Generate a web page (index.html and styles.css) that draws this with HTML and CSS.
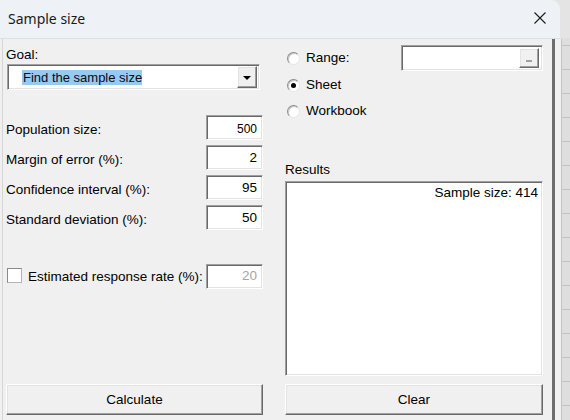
FILE: index.html
```html
<!DOCTYPE html>
<html>
<head>
<meta charset="utf-8">
<link rel="stylesheet" href="styles.css">
</head>
<body>
<div class="titlebar">
  <span class="title">Sample size</span>
  <svg class="close" width="12" height="12" viewBox="0 0 12 12"><path d="M0.5 0.5L11.5 11.5M11.5 0.5L0.5 11.5" stroke="#1b1b1b" stroke-width="1.1" fill="none"/></svg>
</div>
<div class="main">
  <div class="dialog">
    <div class="col left">
      <div class="goal">Goal:</div>
      <div class="select sunken">
        <span class="sel-text">Find the sample size</span>
        <span class="drop raised"><span class="tri"></span></span>
      </div>
      <div class="field first"><span class="lbl">Population size:</span><span class="box sunken small">500</span></div>
      <div class="field"><span class="lbl">Margin of error (%):</span><span class="box sunken">2</span></div>
      <div class="field"><span class="lbl">Confidence interval (%):</span><span class="box sunken">95</span></div>
      <div class="field"><span class="lbl">Standard deviation (%):</span><span class="box sunken">50</span></div>
      <div class="check-row">
        <span class="check"></span>
        <span class="check-lbl">Estimated response rate (%):</span>
        <span class="box sunken disabled">20</span>
      </div>
      <div class="btn raised">Calculate</div>
    </div>
    <div class="col right">
      <div class="radio-row range">
        <span class="radio"></span><span class="radio-lbl">Range:</span>
        <span class="range-box sunken"><span class="ref-btn raised"><span class="dash"></span></span></span>
      </div>
      <div class="radio-row sheet">
        <span class="radio on"></span><span class="radio-lbl">Sheet</span>
      </div>
      <div class="radio-row">
        <span class="radio"></span><span class="radio-lbl">Workbook</span>
      </div>
      <div class="results-lbl">Results</div>
      <div class="results sunken">Sample size: 414</div>
      <div class="btn raised clear">Clear</div>
    </div>
  </div>
  <div class="divider"></div>
  <div class="gutter"></div>
  <div class="sheetstrip"></div>
</div>
</body>
</html>
```
FILE: styles.css
```css
* { box-sizing: border-box; }
html, body { margin: 0; padding: 0; }
body {
  width: 570px;
  height: 420px;
  overflow: hidden;
  background: #e4e4e4;
  font-family: "Liberation Sans", Arial, sans-serif;
  font-size: 13.5px;
  color: #000;
}
.titlebar {
  width: 560px;
  height: 38px;
  background: #eef2f6;
  border-top-right-radius: 9px;
  display: flex;
  align-items: center;
  padding: 0 0 2px 8px;
}
.title {
  font-family: "Noto Sans", "Open Sans", sans-serif;
  font-size: 14px;
  color: #1a1a1a;
}
.close { margin-left: auto; margin-right: 14px; margin-top: 0; }
.main {
  display: flex;
  height: 382px;
  border-top: 1px solid #dcdfe3;
}
.dialog {
  width: 552px;
  background: #f0f0f0;
  display: flex;
  gap: 22px;
  padding: 0 9px 5px 6px;
  box-shadow: inset 2px 0 0 #f0f0f0, inset 3px 0 0 #d6d6d6;
}
.divider { width: 3px; background: #6d6d6d; }
.gutter { width: 6px; background: #f0f0f0; }
.sheetstrip {
  flex: 1;
  border-left: 1px solid #c4c4c4;
  background: #dedede repeating-linear-gradient(to bottom, transparent 0, transparent 6px, #c2c2c2 6px, #c2c2c2 7px, transparent 7px, transparent 24px);
}
.col { display: flex; flex-direction: column; }
.left { width: 257px; }
.right { width: 258px; }

.sunken {
  border: 1px solid;
  border-color: #a0a0a0 #fff #fff #a0a0a0;
  box-shadow: inset 1px 1px 0 #696969, inset -1px -1px 0 #e3e3e3;
  background: #fff;
}
.raised {
  border: 1px solid;
  border-color: #fff #696969 #696969 #fff;
  box-shadow: inset -1px -1px 0 #a0a0a0, inset 1px 1px 0 #e3e3e3;
  background: #f0f0f0;
}

.goal { margin-top: 8px; line-height: 16px; height: 16px; }
.select {
  margin-top: 1px;
  margin-left: 1px;
  width: 253px;
  height: 26px;
  display: flex;
  align-items: center;
  padding: 0 2px 0 14px;
}
.sel-text {
  background: #99c9ef;
  font-size: 13px;
  line-height: 15px;
  padding: 0 0 0 1px;
  color: #0a0a20;
}
.drop {
  margin-left: auto;
  width: 20px;
  height: 22px;
  display: flex;
  align-items: center;
  justify-content: center;
}
.tri {
  width: 0; height: 0;
  border-left: 4px solid transparent;
  border-right: 4px solid transparent;
  border-top: 4px solid #000;
  margin-top: 1px;
}
.field {
  display: flex;
  align-items: center;
  justify-content: space-between;
  height: 25px;
  margin-top: 5px;
}
.field.first { margin-top: 25px; }
.lbl { padding-top: 5px; line-height: 16px; }
.box {
  width: 57px;
  height: 25px;
  text-align: right;
  padding: 4px 5px 0 0;
  line-height: 16px;
}
.box.small { font-size: 12px; padding-top: 5px; }
.box.disabled { color: #a6a6a6; padding-top: 3px; }
.check-row {
  display: flex;
  align-items: center;
  height: 25px;
  margin-top: 34px;
}
.check {
  width: 15px;
  height: 15px;
  margin-left: 1px;
  margin-top: -2px;
  background: #fff;
  border: 1px solid;
  border-color: #8a8a8a #b4b4b4 #b4b4b4 #8a8a8a;
}
.check-lbl { margin-left: 6px; line-height: 16px; }
.check-row .box { margin-left: auto; }
.btn {
  margin-top: auto;
  height: 31px;
  display: flex;
  align-items: center;
  justify-content: center;
  line-height: 16px;
}
.btn.clear { margin-top: 8px; }

.radio-row {
  display: flex;
  align-items: center;
  height: 26px;
}
.radio-row.range { margin-top: 6px; }
.radio-row.sheet { margin-top: 1px; }
.radio {
  width: 13px;
  height: 13px;
  margin-left: 2px;
  border-radius: 50%;
  background: #fff;
  border: 1px solid;
  border-color: #8c8c8c #e6e6e6 #e6e6e6 #8c8c8c;
  box-shadow: inset 1px 1px 0 #c8c8c8;
  display: flex;
  align-items: center;
  justify-content: center;
}
.radio.on::after {
  content: "";
  width: 5px;
  height: 5px;
  border-radius: 50%;
  background: #000;
}
.radio-lbl { margin-left: 6px; line-height: 16px; }
.range-box {
  margin-left: auto;
  width: 142px;
  height: 26px;
  display: flex;
  align-items: center;
  justify-content: flex-end;
  padding-right: 3px;
}
.ref-btn {
  width: 20px;
  height: 20px;
  display: flex;
  align-items: flex-end;
  justify-content: center;
  padding-bottom: 5px;
}
.dash { width: 6px; height: 2px; background: #a0a0a0; }
.results-lbl { margin-top: 38px; line-height: 16px; }
.results {
  margin-top: 3px;
  flex: 1;
  text-align: right;
  padding: 3px 4px 0 0;
  line-height: 16px;
}
```
